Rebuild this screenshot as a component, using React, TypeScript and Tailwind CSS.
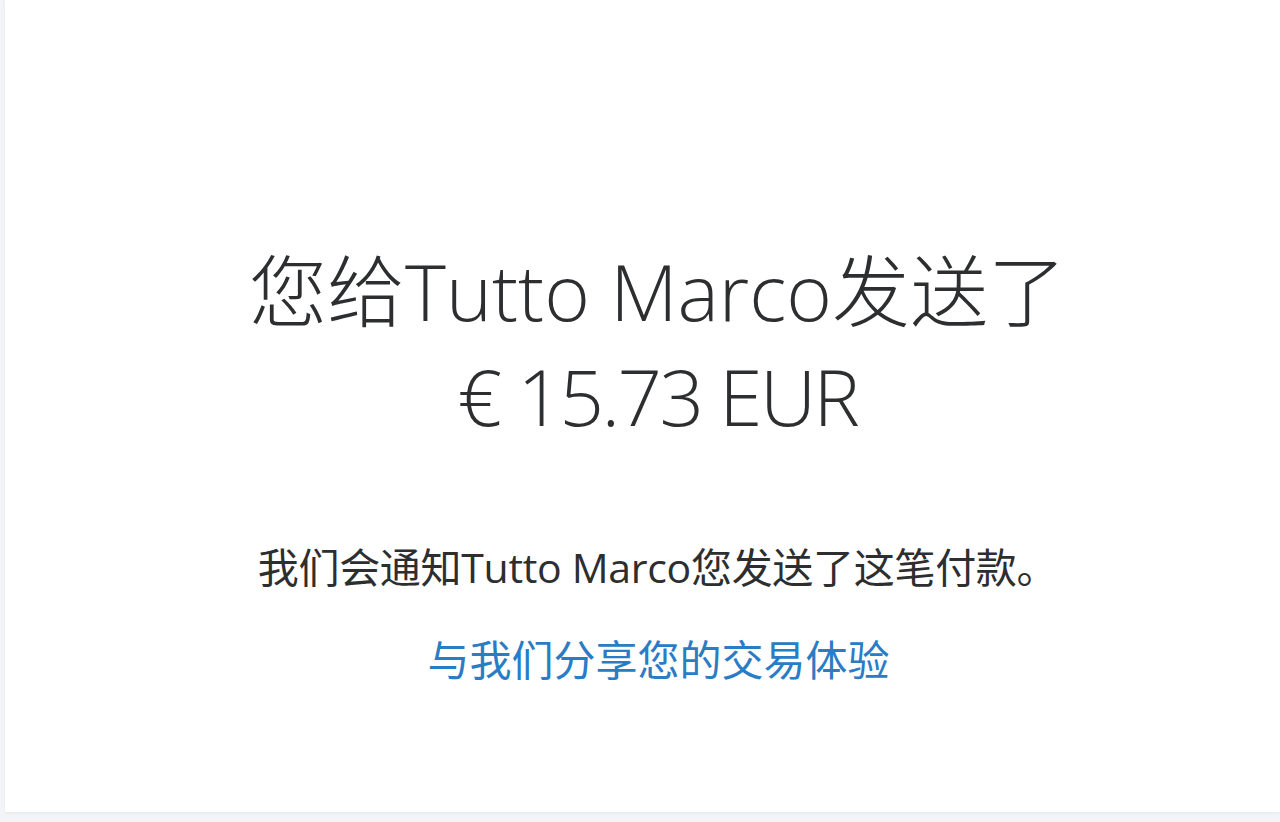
export default function App() {
  return (
    <div className="h-[822px] w-[1280px] bg-[#f3f4f7] pl-[5px] pb-[10px]">
      <div
        className="h-full w-full bg-white shadow-[0_1px_3px_rgba(0,0,0,0.06)] flex flex-col items-center pt-[239px]"
        style={{ fontFamily: '"Open Sans", "Noto Sans CJK SC", sans-serif' }}
      >
        <h1 className="text-[#2c2e2f] text-[78px] leading-[105px] font-light text-center pl-[30px]">
          您给Tutto Marco发送了
          <br />
          <span className="tracking-[-2.5px]">€ 15.73 EUR</span>
        </h1>
        <p className="mt-[90px] text-[#2c2e2f] text-[41px] leading-[56px] text-center pl-[30px] tracking-[-0.3px]">
          我们会通知Tutto Marco您发送了这笔付款。
        </p>
        <a className="mt-[37px] text-[#2a7cc4] text-[42px] leading-[56px] text-center pl-[32px]">
          与我们分享您的交易体验
        </a>
      </div>
    </div>
  );
}
